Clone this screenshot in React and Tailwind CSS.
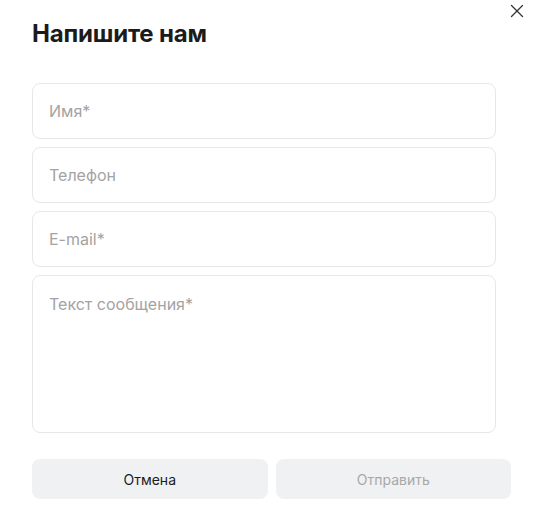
import { X } from "lucide-react";

const fields = ["Имя*", "Телефон", "E-mail*"];

export default function App() {
  return (
    <div
      className="relative w-[533px] h-[508px] bg-white pl-8 pr-[22px] pt-[21px]"
      style={{ fontFamily: "Inter, 'Noto Sans', sans-serif" }}
    >
      {/* close */}
      <button type="button" aria-label="Закрыть" className="absolute left-[506px] top-0 text-[#333]">
        <X className="w-[22px] h-[22px]" strokeWidth={1.4} />
      </button>

      <h2 className="text-[24px] leading-[26px] font-bold text-[#1b1b1b] tracking-[-0.2px]">Напишите нам</h2>

      <form className="mt-[36px] flex flex-col gap-2 w-[464px]">
        {fields.map((f) => (
          <input
            key={f}
            type="text"
            placeholder={f}
            className="h-[56px] w-full px-4 text-[16px] border border-[#e6e7e9] rounded-lg bg-white text-black placeholder:text-[#a3a3a3] outline-none"
          />
        ))}
        <textarea
          placeholder="Текст сообщения*"
          className="h-[158px] w-full px-4 pt-[17px] text-[16px] leading-[22px] border border-[#e6e7e9] rounded-lg bg-white text-black placeholder:text-[#a3a3a3] outline-none resize-none"
        />
      </form>

      <div className="mt-[26px] flex gap-2">
        <button type="button" className="flex-1 h-[40px] rounded-lg bg-[#f0f1f3] text-[14px] text-[#1b1b1b]">
          Отмена
        </button>
        <button type="button" className="flex-1 h-[40px] rounded-lg bg-[#f0f1f3] text-[14px] text-[#a8a8a8]">
          Отправить
        </button>
      </div>
    </div>
  );
}
